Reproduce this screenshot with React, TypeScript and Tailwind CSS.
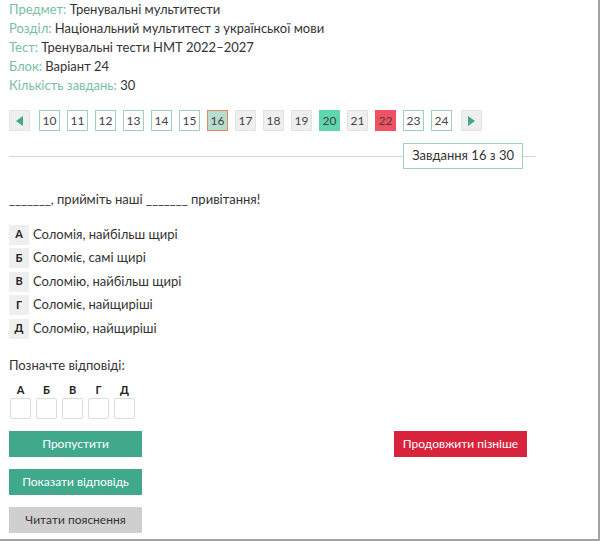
import { useState } from "react";

type PageState = "open" | "current" | "seen" | "right" | "wrong";

const pages: { n: number; state: PageState }[] = [
  { n: 10, state: "open" },
  { n: 11, state: "open" },
  { n: 12, state: "open" },
  { n: 13, state: "open" },
  { n: 14, state: "open" },
  { n: 15, state: "open" },
  { n: 16, state: "current" },
  { n: 17, state: "seen" },
  { n: 18, state: "seen" },
  { n: 19, state: "seen" },
  { n: 20, state: "right" },
  { n: 21, state: "seen" },
  { n: 22, state: "wrong" },
  { n: 23, state: "open" },
  { n: 24, state: "open" },
];

const pageStyles: Record<PageState, string> = {
  open: "bg-white border-[#9fd0bf]",
  current: "bg-[#b9dcd1] border-[#e38a5c]",
  seen: "bg-[#efefef] border-[#e2e2e2]",
  right: "bg-[#5fd6ae] border-[#5fd6ae]",
  wrong: "bg-[#f05262] border-[#f05262]",
};

const info = [
  ["Предмет", "Тренувальні мультитести"],
  ["Розділ", "Національний мультитест з української мови"],
  ["Тест", "Тренувальні тести НМТ 2022–2027"],
  ["Блок", "Варіант 24"],
  ["Кількість завдань", "30"],
];

const options = [
  ["А", "Соломія, найбільш щирі"],
  ["Б", "Соломіє, самі щирі"],
  ["В", "Соломію, найбільш щирі"],
  ["Г", "Соломіє, найщиріші"],
  ["Д", "Соломію, найщиріші"],
];

export default function App() {
  const [picked, setPicked] = useState<string | null>(null);

  return (
    <div
      className="w-[600px] h-[541px] bg-white border-r-2 border-b-2 border-[#a3a3a3] text-[#333] overflow-hidden"
      style={{ fontFamily: "Lato, 'Noto Sans', sans-serif" }}
    >
      <div className="pl-[9px] pr-[62px]">
        <div className="text-[13px] leading-[19px]">
          {info.map(([label, value]) => (
            <div key={label}>
              <span className="text-[#79bda6]">{label}:</span> {value}
            </div>
          ))}
        </div>

        <div className="mt-[15px] flex items-center gap-[7px] text-[12px]">
          <button className="w-[21px] h-[21px] mr-[2px] bg-[#efefef] border border-[#e4e4e4] flex items-center justify-center">
            <span className="w-0 h-0 border-y-[5px] border-y-transparent border-r-[7px] border-r-[#3fa98a]" />
          </button>
          {pages.map((p) => (
            <button
              key={p.n}
              className={`w-[21px] h-[21px] border flex items-center justify-center text-[#444] ${pageStyles[p.state]}`}
            >
              {p.n}
            </button>
          ))}
          <button className="w-[21px] h-[21px] ml-[2px] bg-[#efefef] border border-[#e4e4e4] flex items-center justify-center">
            <span className="w-0 h-0 border-y-[5px] border-y-transparent border-l-[7px] border-l-[#3fa98a]" />
          </button>
        </div>

        <div className="mt-[12px] flex items-center">
          <div className="flex-1 h-px bg-[#d6d6d6]" />
          <div className="px-[8px] h-[26px] border border-[#9fd0bf] flex items-center text-[13px]">
            Завдання 16 з 30
          </div>
          <div className="w-[13px] h-px bg-[#d6d6d6]" />
        </div>

        <p className="mt-[21px] text-[13px]">
          _______, прийміть наші _______ привітання!
        </p>

        <div className="mt-[15px] flex flex-col gap-[3.5px]">
          {options.map(([letter, text]) => (
            <div key={letter} className="flex items-center gap-[4px] text-[13px]">
              <span className="w-[20px] h-[20px] bg-[#efefef] flex items-center justify-center text-[11px] font-bold text-[#222]">
                {letter}
              </span>
              {text}
            </div>
          ))}
        </div>

        <p className="mt-[17px] text-[13px]">Позначте відповіді:</p>

        <div className="mt-[8px] flex gap-[5px] pl-[1px]">
          {options.map(([letter]) => (
            <div key={letter} className="flex flex-col items-center">
              <span className="text-[11px] font-bold text-[#222] leading-[14px]">{letter}</span>
              <button
                onClick={() => setPicked(letter)}
                className={`mt-[1px] w-[21px] h-[21px] border rounded-[2px] ${
                  picked === letter ? "bg-[#5fd6ae] border-[#5fd6ae]" : "bg-white border-[#dcdcdc]"
                }`}
              />
            </div>
          ))}
        </div>

        <div className="mt-[12px] flex justify-between items-start">
          <div className="flex flex-col gap-[12px] text-[12px]">
            <button className="w-[133px] h-[26px] bg-[#41a98b] text-white">Пропустити</button>
            <button className="w-[133px] h-[26px] bg-[#41a98b] text-white">Показати відповідь</button>
            <button className="w-[133px] h-[26px] bg-[#cfcfcf] text-[#333]">Читати пояснення</button>
          </div>
          <button className="w-[133px] h-[26px] mr-[9px] bg-[#d8233d] text-white text-[12px]">
            Продовжити пізніше
          </button>
        </div>
      </div>
    </div>
  );
}
